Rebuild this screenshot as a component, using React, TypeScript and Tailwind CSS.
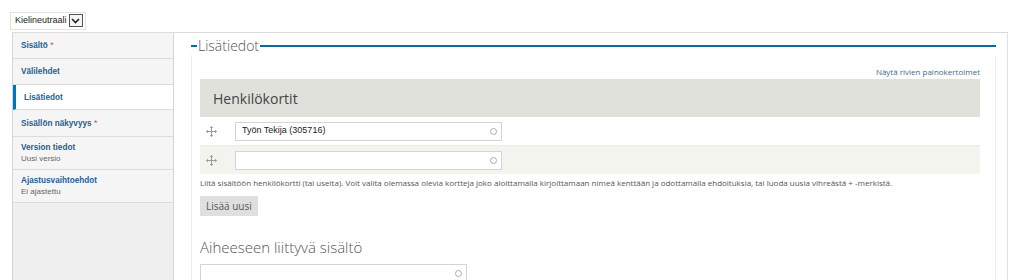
import React from "react";

const arial = { fontFamily: '"Liberation Sans", Arial, sans-serif' };
const open = { fontFamily: '"Open Sans", "Noto Sans", sans-serif' };

function Drag() {
  return (
    <svg width="11" height="11" viewBox="0 0 11 11" className="text-[#999]">
      <path d="M5.5 0.5v10M0.5 5.5h10" stroke="currentColor" strokeWidth="1" fill="none" />
      <path d="M5.5 0L3.8 2h3.4zM5.5 11L3.8 9h3.4zM0 5.5L2 3.8v3.4zM11 5.5L9 3.8v3.4z" fill="currentColor" />
    </svg>
  );
}

function AutoInput({ value, width }: { value?: string; width: string }) {
  return (
    <div className={`${width} h-[19px] border border-[#d4d4d4] bg-white flex items-center pl-[6px] pr-[4px]`}>
      <span className="flex-1 text-[9px] text-[#222]" style={arial}>{value}</span>
      <span className="w-[7px] h-[7px] rounded-full border border-[#aaa]" />
    </div>
  );
}

function SideItem({ title, sub, req, active, h }: { title: string; sub?: string; req?: boolean; active?: boolean; h: string }) {
  return (
    <div
      className={`${h} shrink-0 border-b border-[#dcdcdc] flex flex-col justify-center pl-[8px] ${
        active ? "bg-white border-l-[3px] border-l-[#0074bd]" : "bg-[#f5f5f5]"
      }`}
      style={arial}
    >
      <div className="text-[8.2px] font-bold text-[#1d5f95] leading-[11px]">
        {title}
        {req && <span className="text-[#e0474c] font-normal text-[9px]"> *</span>}
      </div>
      {sub && <div className="text-[8px] text-[#666] leading-[11px]">{sub}</div>}
    </div>
  );
}

export default function App() {
  return (
    <div className="w-[1024px] h-[280px] overflow-hidden bg-white relative">
      <div className="pt-[5px] pl-[10px] h-[32px]">
        <div className="inline-flex items-center h-[18px] border border-[#e2e2e2] pl-[4px] pr-[2px] gap-[2px]" style={arial}>
          <span className="text-[9px] text-[#222]">Kielineutraali</span>
          <span className="w-[14px] h-[13px] border border-[#555] bg-[#f4f4f4] flex items-center justify-center">
            <svg width="9" height="6" viewBox="0 0 9 6">
              <path d="M1 1l3.5 3.5L8 1" stroke="#222" strokeWidth="1.6" fill="none" />
            </svg>
          </span>
        </div>
      </div>
      <div className="flex ml-[12px] mr-[16px] border-t border-[#dcdcdc] h-[260px]">
        <div className="w-[162px] shrink-0 bg-[#efefef] border-l border-r border-[#d6d6d6] flex flex-col">
          <SideItem h="h-[26px]" title="Sisältö" req />
          <SideItem h="h-[26px]" title="Välilehdet" />
          <SideItem h="h-[25px]" title="Lisätiedot" active />
          <SideItem h="h-[27px]" title="Sisällön näkyvyys" req />
          <SideItem h="h-[33px]" title="Version tiedot" sub="Uusi versio" />
          <SideItem h="h-[33px]" title="Ajastusvaihtoehdot" sub="Ei ajastettu" />
        </div>
        <div className="flex-1 border-r border-[#e2e2e2] pl-[17px] pr-[11px] pt-[4px]">
          <div className="flex items-center h-[18px]">
            <span className="w-[6px] h-[2px] bg-[#0a6a9c]" />
            <span className="text-[14px] font-light text-[#555] px-[1px] leading-[18px]" style={open}>Lisätiedot</span>
            <span className="flex-1 h-[2px] bg-[#0a6a9c]" />
          </div>
          <div className="border-l border-r border-[#ececec] h-[240px] pl-[8px] pr-[15px]">
            <div className="h-[24px] flex items-end justify-end pb-[1px]">
              <span className="text-[8px] text-[#3c6a8f]" style={open}>Näytä rivien painokertoimet</span>
            </div>
            <div className="h-[38px] bg-[#e1e1dc] flex items-center pl-[13px]">
              <span className="text-[14px] text-[#444]" style={open}>Henkilökortit</span>
            </div>
            <div className="h-[29px] bg-white border-b border-[#ececec] flex items-center">
              <div className="w-[35px] pl-[6px] flex items-center"><Drag /></div>
              <AutoInput value="Työn Tekija (305716)" width="w-[267px]" />
            </div>
            <div className="h-[28px] bg-[#f4f4ef] flex items-center">
              <div className="w-[35px] pl-[6px] flex items-center"><Drag /></div>
              <AutoInput width="w-[267px]" />
            </div>
            <div className="pt-[3px] text-[8px] text-[#555] leading-[12px]" style={open}>
              Liitä sisältöön henkilökortti (tai useita). Voit valita olemassa olevia kortteja joko aloittamalla kirjoittamaan nimeä kenttään ja odottamalla ehdoituksia, tai luoda uusia vihreästä + -merkistä.
            </div>
            <div className="pt-[7px] flex">
              <div className="flex items-center h-[20px] px-[6px] bg-[#dfdfdf] text-[10px] text-[#555]" style={open}>Lisää uusi</div>
            </div>
            <div className="pt-[21px] text-[15px] font-light text-[#555] leading-[20px]" style={open}>Aiheeseen liittyvä sisältö</div>
            <div className="pt-[7px]">
              <AutoInput width="w-[267px]" />
            </div>
          </div>
        </div>
      </div>
    </div>
  );
}
